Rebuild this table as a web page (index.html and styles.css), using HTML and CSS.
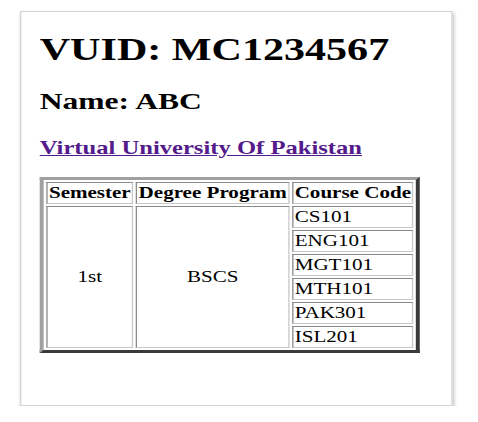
FILE: index.html
```html
<!DOCTYPE html>
<html>
<head>
<meta charset="utf-8">
<link rel="stylesheet" href="styles.css">
</head>
<body>
<div class="card">
  <h1 class="vuid">VUID: MC1234567</h1>
  <h2 class="name">Name: ABC</h2>
  <h3 class="uni"><a class="uni-link" href="#">Virtual University Of Pakistan</a></h3>
  <table class="courses">
    <tr>
      <th>Semester</th>
      <th>Degree Program</th>
      <th>Course Code</th>
    </tr>
    <tr>
      <td class="center" rowspan="6">1st</td>
      <td class="center" rowspan="6">BSCS</td>
      <td>CS101</td>
    </tr>
    <tr><td>ENG101</td></tr>
    <tr><td>MGT101</td></tr>
    <tr><td>MTH101</td></tr>
    <tr><td>PAK301</td></tr>
    <tr><td>ISL201</td></tr>
  </table>
</div>
</body>
</html>
```

FILE: styles.css
```css
html, body {
  margin: 0;
  padding: 0;
  background: #ffffff;
}

body {
  font-family: "Liberation Serif", "Times New Roman", serif;
  color: #000;
  padding-top: 11px;
}

.card {
  box-sizing: border-box;
  width: 329px;
  margin-left: 20px;
  border: 1px solid #d4d4d4;
  box-shadow: 1px 2px 3px rgba(0, 0, 0, 0.25);
  padding: 0 14px 52px;
  transform: scaleX(1.315);
  transform-origin: left top;
  background: #fff;
}

.vuid {
  font-size: 32px;
  margin: 19px 0 20px;
}

.name {
  font-size: 24px;
  margin: 19px 0;
}

.uni {
  font-size: 18.72px;
  margin: 22px 0 18px;
}

.uni-link {
  color: #551a8b;
  text-decoration: underline;
}

.courses {
  border-collapse: separate;
  border-spacing: 2px;
  border-width: 3px;
  border-style: solid;
  border-color: #a0a0a0 #3a3a3a #3a3a3a #a0a0a0;
  font-size: 16px;
}

.courses th,
.courses td {
  padding: 1px;
  border-width: 1px;
  border-style: solid;
  border-color: #8a8a8a #c8c8c8 #c8c8c8 #8a8a8a;
  text-align: left;
}

.courses th {
  font-weight: bold;
  text-align: center;
}

.courses td.center {
  text-align: center;
  vertical-align: middle;
}
```
